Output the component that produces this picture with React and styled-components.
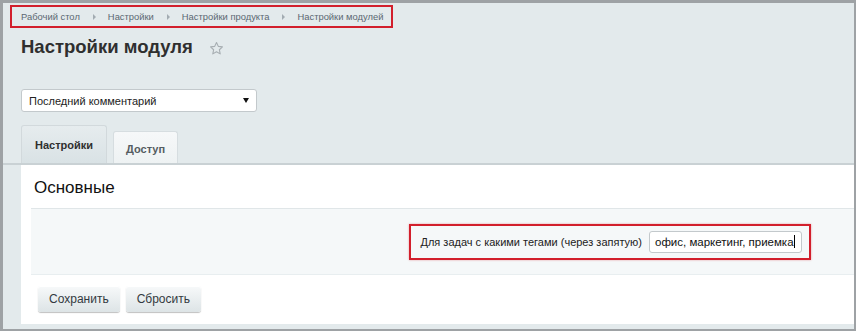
import React from 'react';
import styled, { createGlobalStyle } from 'styled-components';

const GlobalStyle = createGlobalStyle`
    html, body {
        margin: 0;
        padding: 0;
        background: #ffffff;
        font-family: "Liberation Sans", Arial, sans-serif;
    }
    * {
        box-sizing: border-box;
    }
`;

export const Frame = styled.div`
    width: 856px;
    height: 331px;
    border-style: solid;
    border-color: #9ea2a5;
    border-width: 3px 2px 2px 3px;
    background: #e3eaec;
    display: flex;
    flex-direction: column;
`;

export const Head = styled.div`
    padding: 2px 0 0 7px;
`;

export const Crumbs = styled.div`
    display: inline-flex;
    align-items: center;
    height: 23px;
    border: 2px solid #d21f2c;
    padding: 0 8px 0 9px;
    font-size: 9.4px;
    color: #5b6872;
`;

export const Crumb = styled.span`
    white-space: nowrap;
`;

export const Arrow = styled.span`
    width: 0;
    height: 0;
    margin: 0 12px 0 13px;
    border-top: 3px solid transparent;
    border-bottom: 3px solid transparent;
    border-left: 3px solid #a3acb2;
`;

export const TitleRow = styled.div`
    display: flex;
    align-items: center;
    padding-left: 18px;
    margin-top: 7px;
    height: 24px;
`;

export const Title = styled.h1`
    margin: 0;
    font-size: 18.5px;
    font-weight: bold;
    color: #2f2f2f;
`;

export const Star = styled.svg`
    margin-left: 16px;
    margin-top: 2px;
`;

export const Select = styled.div`
    display: flex;
    align-items: center;
    justify-content: space-between;
    margin: 30px 0 0 18px;
    width: 236px;
    height: 23px;
    background: #ffffff;
    border: 1px solid #c3c9cc;
    border-radius: 3px;
    padding: 0 7px 0 7px;
    font-size: 11px;
    color: #222;
`;

export const Caret = styled.span`
    width: 0;
    height: 0;
    border-left: 3px solid transparent;
    border-right: 3px solid transparent;
    border-top: 5px solid #111;
`;

export const TabStrip = styled.div`
    display: flex;
    align-items: flex-end;
    gap: 6px;
    margin-top: 13px;
    padding-left: 18px;
    border-bottom: 2px solid #c9d1d4;
`;

export const Tab = styled.div`
    display: flex;
    align-items: center;
    height: ${p => p.active ? '38px' : '32px'};
    padding: ${p => p.active ? '0 13px' : '2px 12px 0'};
    font-size: 11px;
    font-weight: bold;
    color: ${p => p.active ? '#2f2f2f' : '#555c61'};
    background: ${p => p.active
        ? 'linear-gradient(#e6ecee, #d9e2e5)'
        : 'linear-gradient(#f6f8f9, #eef2f3)'};
    border: 1px solid ${p => p.active ? '#d2d9dc' : '#d6dde0'};
    border-bottom: none;
    border-radius: 3px 3px 0 0;
`;

export const Panel = styled.div`
    flex: 1;
    margin: 0 0 5px 18px;
    background: #ffffff;
    display: flex;
    flex-direction: column;
`;

export const Section = styled.h2`
    margin: 0;
    padding: 13px 0 0 13px;
    height: 43px;
    font-size: 17px;
    font-weight: normal;
    color: #111;
`;

export const FieldBlock = styled.div`
    display: flex;
    align-items: center;
    justify-content: flex-end;
    margin-left: 10px;
    height: 67px;
    background: #f5f8f9;
    border-top: 1px solid #e0e6e8;
    border-bottom: 1px solid #e8eef0;
    padding-right: 43px;
`;

export const Highlight = styled.div`
    display: flex;
    align-items: center;
    height: 36px;
    border: 2px solid #d21f2c;
    padding: 0 7px 0 9px;
    box-shadow: 0 0 2px rgba(210, 31, 44, 0.4);
`;

export const Label = styled.label`
    font-size: 11px;
    color: #222;
    margin-right: 7px;
    white-space: nowrap;
`;

export const Input = styled.div`
    display: flex;
    align-items: center;
    width: 153px;
    height: 22px;
    background: #ffffff;
    border: 1px solid #c3c9cc;
    border-radius: 3px;
    padding-left: 5px;
    font-size: 11.5px;
    color: #111;
    white-space: nowrap;
`;

export const TextCaret = styled.span`
    display: inline-block;
    width: 1px;
    height: 13px;
    background: #000;
`;

export const Buttons = styled.div`
    display: flex;
    gap: 6px;
    padding: 11px 0 0 17px;
`;

export const Button = styled.button`
    height: 26px;
    padding: 0 11px;
    font-family: "Liberation Sans", Arial, sans-serif;
    font-size: 12px;
    color: #333a3f;
    background: linear-gradient(#f7f9fa, #dde4e6);
    border: none;
    border-radius: 3px;
    box-shadow: 0 1px 1px rgba(0, 0, 0, 0.25), inset 0 1px 0 #ffffff;
    cursor: pointer;
`;

const crumbs = ['Рабочий стол', 'Настройки', 'Настройки продукта', 'Настройки модулей'];

export default function App() {
    return (
        <>
            <GlobalStyle />
            <Frame>
                <Head>
                    <Crumbs>
                        {crumbs.map((c, i) => (
                            <React.Fragment key={c}>
                                {i > 0 && <Arrow />}
                                <Crumb>{c}</Crumb>
                            </React.Fragment>
                        ))}
                    </Crumbs>
                </Head>
                <TitleRow>
                    <Title>Настройки модуля</Title>
                    <Star width="15" height="15" viewBox="0 0 24 24">
                        <path
                            d="M12 2.5l2.9 6.1 6.6.8-4.9 4.6 1.3 6.6L12 17.3l-5.9 3.3 1.3-6.6-4.9-4.6 6.6-.8z"
                            fill="none"
                            stroke="#a7aeb2"
                            strokeWidth="1.8"
                            strokeLinejoin="round"
                        />
                    </Star>
                </TitleRow>
                <Select>
                    <span>Последний комментарий</span>
                    <Caret />
                </Select>
                <TabStrip>
                    <Tab active>Настройки</Tab>
                    <Tab>Доступ</Tab>
                </TabStrip>
                <Panel>
                    <Section>Основные</Section>
                    <FieldBlock>
                        <Highlight>
                            <Label>Для задач с какими тегами (через запятую)</Label>
                            <Input>
                                офис, маркетинг, приемка<TextCaret />
                            </Input>
                        </Highlight>
                    </FieldBlock>
                    <Buttons>
                        <Button>Сохранить</Button>
                        <Button>Сбросить</Button>
                    </Buttons>
                </Panel>
            </Frame>
        </>
    );
}
